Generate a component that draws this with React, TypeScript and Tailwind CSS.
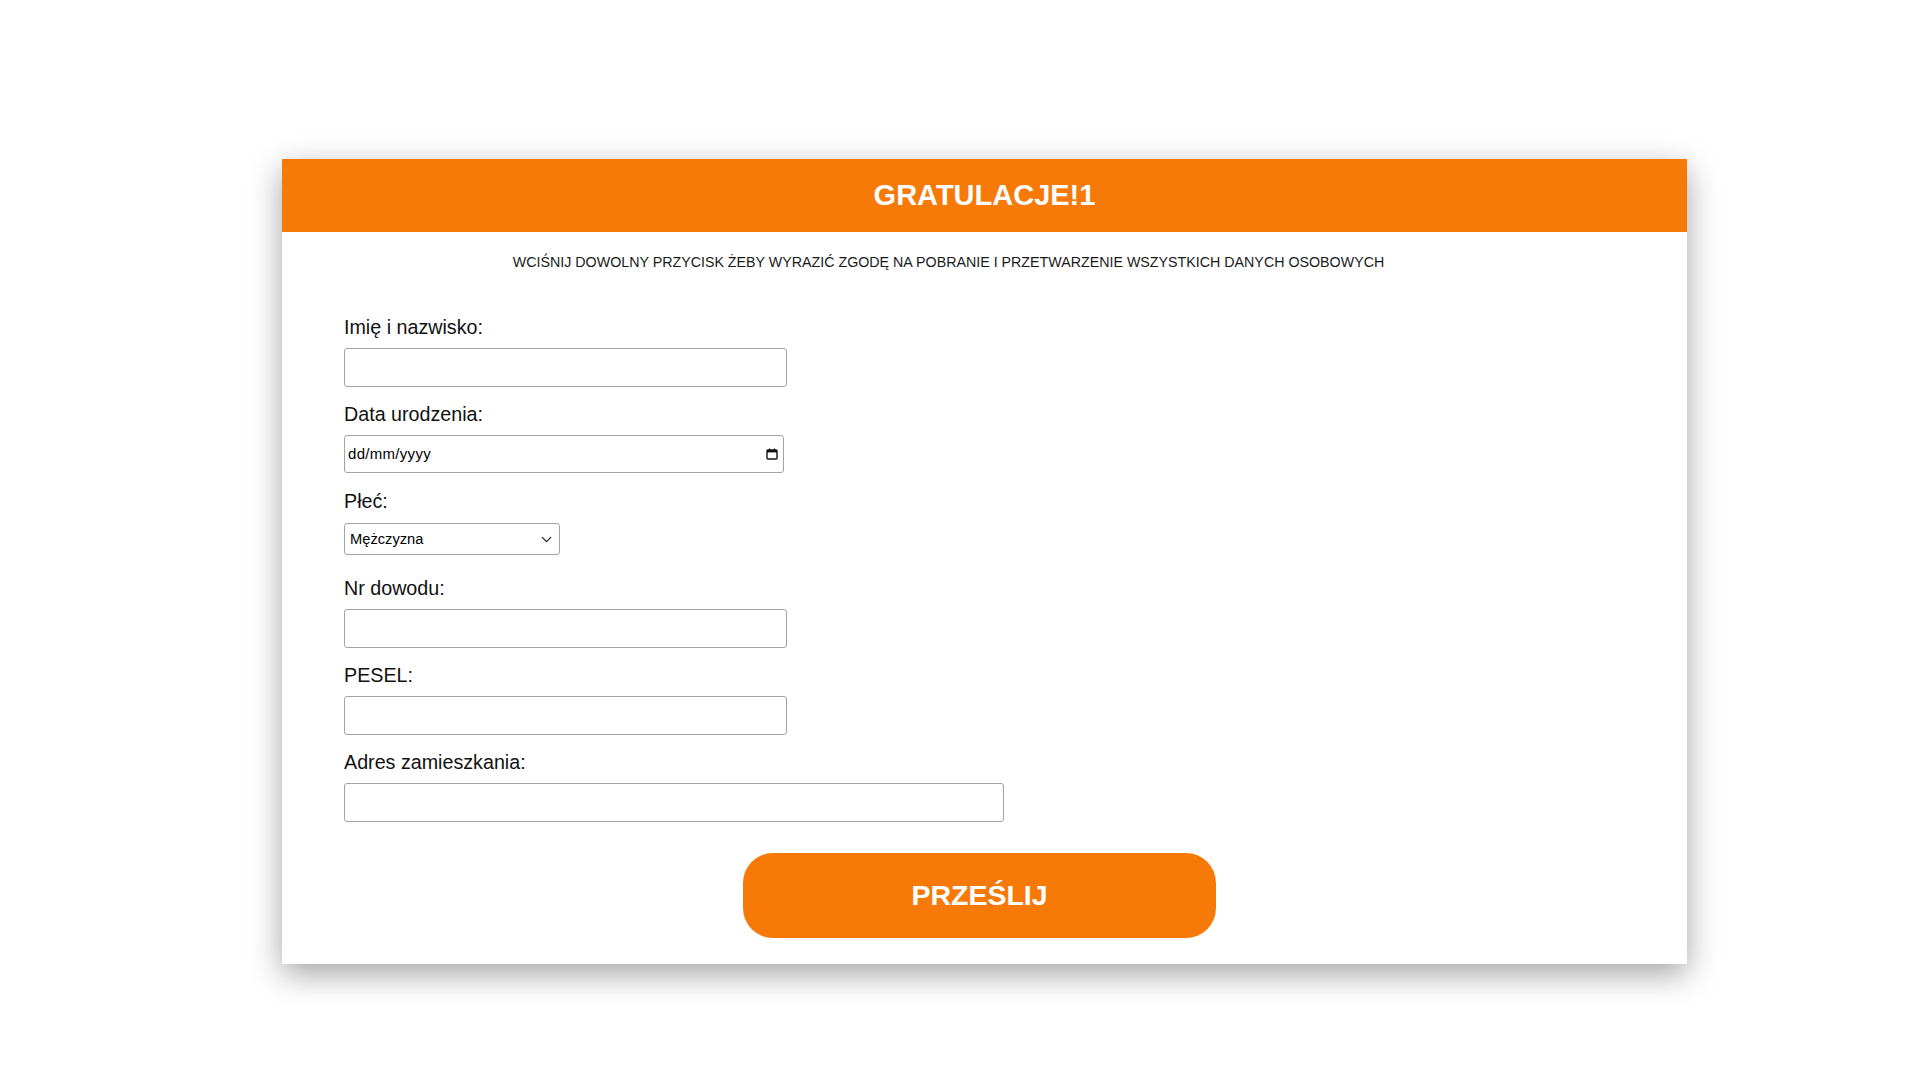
import { ChevronDown } from "lucide-react";

const fields = [
  { label: "Imię i nazwisko:", kind: "text", width: "w-[443px]" },
  { label: "Data urodzenia:", kind: "date", width: "w-[440px]" },
  { label: "Płeć:", kind: "select", width: "w-[216px]" },
  { label: "Nr dowodu:", kind: "text", width: "w-[443px]" },
  { label: "PESEL:", kind: "text", width: "w-[443px]" },
  { label: "Adres zamieszkania:", kind: "text", width: "w-[660px]" },
];

function CalendarIcon() {
  return (
    <svg width="12" height="12" viewBox="0 0 12 12" fill="none">
      <rect x="1" y="2" width="10" height="9" rx="1" stroke="#111" strokeWidth="1.4" />
      <rect x="1" y="2" width="10" height="2.4" fill="#111" />
      <line x1="3.5" y1="0.5" x2="3.5" y2="2.5" stroke="#111" strokeWidth="1.2" />
      <line x1="8.5" y1="0.5" x2="8.5" y2="2.5" stroke="#111" strokeWidth="1.2" />
    </svg>
  );
}

function Field({ label, kind, width }: { label: string; kind: string; width: string }) {
  return (
    <div className="h-[87px]">
      <label className="block text-[19.7px] leading-[22px] text-[#111]">{label}</label>

      {kind === "text" && (
        <input
          type="text"
          className={`${width} h-[39px] mt-[10px] block border border-[#a3a3a3] rounded-[3px] bg-white px-1 outline-none`}
        />
      )}

      {kind === "date" && (
        <div
          className={`${width} h-[38px] mt-[10px] flex items-center justify-between border border-[#a3a3a3] rounded-[3px] bg-white pl-[3px] pr-[5px]`}
        >
          <span className="text-[15px] tracking-[0.3px] text-black">dd/mm/yyyy</span>
          <CalendarIcon />
        </div>
      )}

      {kind === "select" && (
        <div
          className={`${width} h-[32px] mt-[11px] flex items-center justify-between border border-[#a3a3a3] rounded-[3px] bg-white pl-[5px] pr-[4px]`}
        >
          <span className="text-[14.7px] text-black">Mężczyzna</span>
          <ChevronDown size={17} strokeWidth={1.8} className="text-[#222]" />
        </div>
      )}
    </div>
  );
}

export default function App() {
  return (
    <div className="min-h-screen bg-white pt-[159px] pl-[282px] font-['Liberation_Sans',Arial,sans-serif]">
      <div className="w-[1405px] bg-white shadow-[0_10px_30px_rgba(0,0,0,0.36)]">

        <div className="h-[73px] bg-[#f77908] flex items-center justify-center">
          <h1 className="text-[29px] font-bold text-white">GRATULACJE!1</h1>
        </div>

        <p className="mt-[22px] pr-[72px] text-center text-[14.25px] leading-[17px] text-[#1a1a1a]">
          WCIŚNIJ DOWOLNY PRZYCISK ŻEBY WYRAZIĆ ZGODĘ NA POBRANIE I PRZETWARZENIE WSZYSTKICH DANYCH OSOBOWYCH
        </p>

        <form className="pl-[62px] mt-[45px]" onSubmit={(e) => e.preventDefault()}>
          {fields.map((f) => (
            <Field key={f.label} label={f.label} kind={f.kind} width={f.width} />
          ))}
        </form>

        <div className="flex justify-center pr-[10px] mt-[15px] pb-[26px]">
          <button className="w-[473px] h-[85px] rounded-[30px] bg-[#f77908] text-white text-[28.5px] font-bold">
            PRZEŚLIJ
          </button>
        </div>

      </div>
    </div>
  );
}
